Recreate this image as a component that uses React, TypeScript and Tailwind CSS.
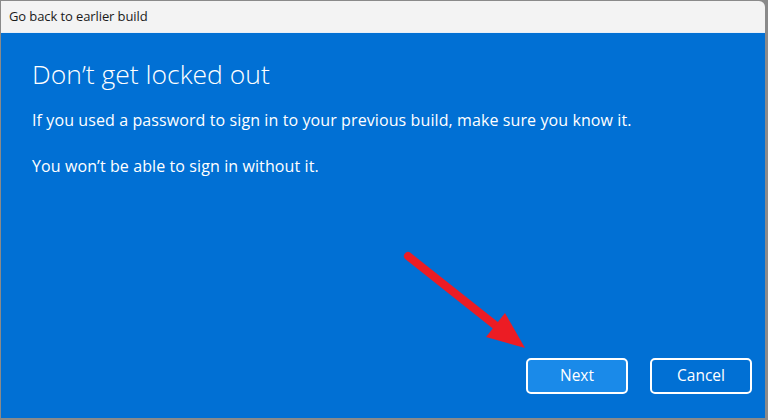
import React from 'react';

const font = { fontFamily: '"Open Sans", "Noto Sans", sans-serif' };

const App: React.FC = () => {
  return (
    <div className="relative w-[768px] h-[420px] bg-[#8a8a8a] pl-px pt-px pr-[3px] pb-[2px]" style={font}>
      <div className="flex flex-col w-full h-full rounded-tr-[6px] overflow-hidden">
        {/* Title bar */}
        <div className="h-[32px] shrink-0 bg-[#f3f3f3] flex items-center pl-[8px] border-b border-[#e6eef8]">
          <span className="text-[13px] text-[#1a1a1a] tracking-[-0.1px]">Go back to earlier build</span>
        </div>

        {/* Content */}
        <div className="flex-1 flex flex-col bg-[#0170d4] text-white px-[31px] pb-[24px]">
          <h1 className="mt-[24px] text-[26.5px] font-light leading-[34px]">Don’t get locked out</h1>
          <p className="mt-[19px] text-[16px] leading-[20px] tracking-[0.1px]">
            If you used a password to sign in to your previous build, make sure you know it.
          </p>
          <p className="mt-[26px] text-[16px] leading-[20px] tracking-[0.1px]">
            You won’t be able to sign in without it.
          </p>

          <div className="mt-auto flex justify-end gap-[22px] -mr-[18px]">
            <button className="w-[102px] h-[36px] rounded-[5px] border-2 border-white bg-[#1a8ae9] text-[15.5px]">
              Next
            </button>
            <button className="w-[102px] h-[36px] rounded-[5px] border-2 border-white bg-[#0170d4] text-[15.5px]">
              Cancel
            </button>
          </div>
        </div>
      </div>

      {/* Red annotation arrow */}
      <svg className="absolute left-0 top-0 pointer-events-none" width="768" height="420">
        <line x1="408" y1="256" x2="495" y2="325" stroke="#ec1c24" strokeWidth="8" strokeLinecap="round" />
        <polygon points="486,337 505,313 525,348" fill="#ec1c24" />
      </svg>
    </div>
  );
};

export default App;
